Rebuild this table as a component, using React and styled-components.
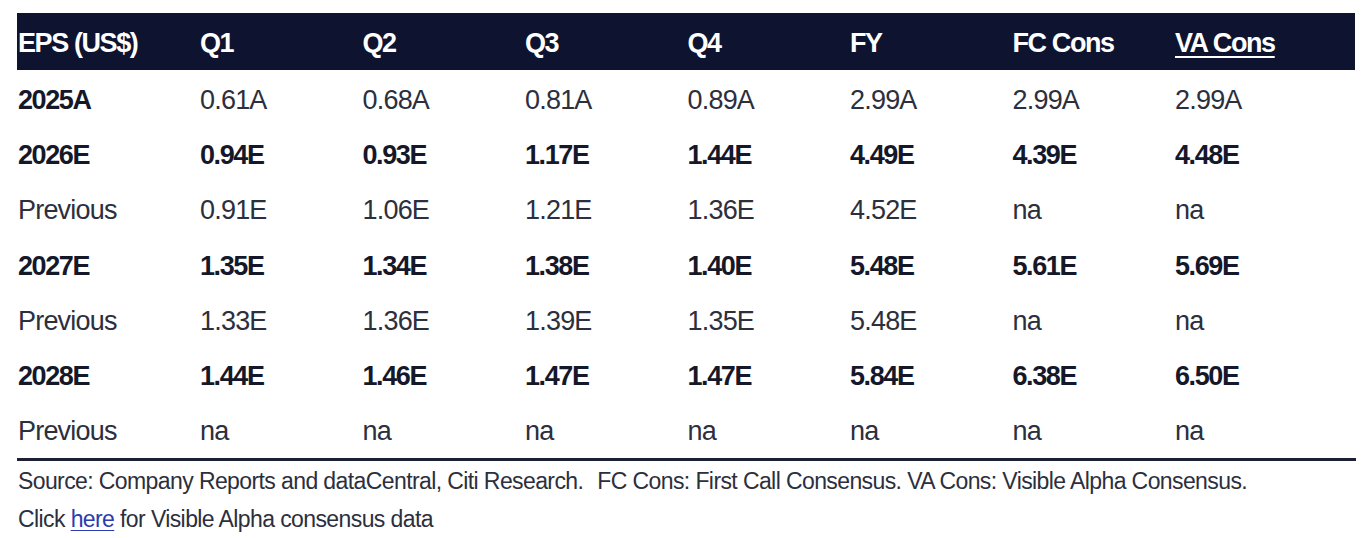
import React from "react";
import styled, { createGlobalStyle } from "styled-components";

const GlobalStyle = createGlobalStyle`
  html, body {
    margin: 0;
    padding: 0;
    background: #ffffff;
  }
  body {
    font-family: "Liberation Sans", Arial, sans-serif;
    color: #272a3a;
  }
`;

const columns = ["Q1", "Q2", "Q3", "Q4", "FY", "FC Cons", "VA Cons"];

const rows = [
  { label: "2025A", bold: false, strongLabel: true, values: ["0.61A", "0.68A", "0.81A", "0.89A", "2.99A", "2.99A", "2.99A"] },
  { label: "2026E", bold: true, values: ["0.94E", "0.93E", "1.17E", "1.44E", "4.49E", "4.39E", "4.48E"] },
  { label: "Previous", bold: false, values: ["0.91E", "1.06E", "1.21E", "1.36E", "4.52E", "na", "na"] },
  { label: "2027E", bold: true, values: ["1.35E", "1.34E", "1.38E", "1.40E", "5.48E", "5.61E", "5.69E"] },
  { label: "Previous", bold: false, values: ["1.33E", "1.36E", "1.39E", "1.35E", "5.48E", "na", "na"] },
  { label: "2028E", bold: true, values: ["1.44E", "1.46E", "1.47E", "1.47E", "5.84E", "6.38E", "6.50E"] },
  { label: "Previous", bold: false, values: ["na", "na", "na", "na", "na", "na", "na"] },
];

const Page = styled.div`
  padding: 13px 8px 0 17px;
`;

const Grid = styled.div`
  display: grid;
  width: 1338px;
  grid-template-columns: 183px repeat(6, 162.5px) 1fr;
`;

const HeaderRow = styled.div`
  display: contents;
`;

const HeadCell = styled.div`
  background: #0e1330;
  color: #ffffff;
  height: 57px;
  display: flex;
  align-items: center;
  font-size: 27px;
  font-weight: 700;
  letter-spacing: -1.4px;
  padding-left: ${(p) => (p.first ? "1px" : "0")};
  padding-top: 3px;
  margin-bottom: 2px;
  box-sizing: border-box;

  u {
    text-decoration-thickness: 2px;
    text-underline-offset: 4px;
  }
`;

const Cell = styled.div`
  height: 55.2px;
  display: flex;
  align-items: center;
  font-size: 27px;
  font-weight: ${(p) => (p.bold ? 700 : 400)};
  color: ${(p) => (p.bold ? "#151829" : "#2c2f3d")};
  letter-spacing: ${(p) => (p.bold ? "-1.4px" : "-0.8px")};
  padding-left: ${(p) => (p.first ? "1px" : "0")};
  padding-top: 2px;
  box-sizing: border-box;
`;

const Rule = styled.div`
  height: 3px;
  background: #1c2033;
  width: 1339px;
`;

const Notes = styled.div`
  font-size: 23px;
  letter-spacing: -0.6px;
  color: #2c2f3d;
  padding-left: 1px;
  line-height: 38px;
  padding-top: 1px;
`;

const Link = styled.a`
  color: #2b3bb0;
  text-decoration: underline;
  text-decoration-thickness: 1px;
  text-underline-offset: 3px;
`;

const Gap = styled.span`
  display: inline-block;
  width: 14px;
`;

export default function App() {
  return (
    <>
      <GlobalStyle />
      <Page>
        <Grid>
          <HeaderRow>
            <HeadCell first>EPS (US$)</HeadCell>
            {columns.map((c) => (
              <HeadCell key={c}>{c === "VA Cons" ? <u>{c}</u> : c}</HeadCell>
            ))}
          </HeaderRow>
          {rows.map((r, i) => (
            <React.Fragment key={i}>
              <Cell first bold={r.bold || r.strongLabel}>
                {r.label}
              </Cell>
              {r.values.map((v, j) => (
                <Cell key={j} bold={r.bold}>
                  {v}
                </Cell>
              ))}
            </React.Fragment>
          ))}
        </Grid>
        <Rule />
        <Notes>
          <div>
            Source: Company Reports and dataCentral, Citi Research.
            <Gap />
            FC Cons: First Call Consensus. VA Cons: Visible Alpha Consensus.
          </div>
          <div>
            Click <Link href="#">here</Link> for Visible Alpha consensus data
          </div>
        </Notes>
      </Page>
    </>
  );
}
